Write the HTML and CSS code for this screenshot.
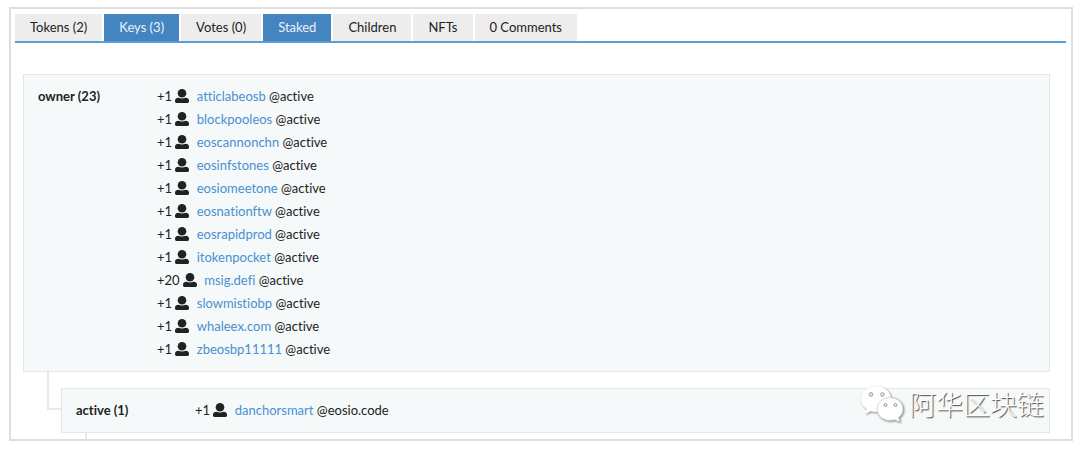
FILE: index.html
```html
<!DOCTYPE html>
<html lang="en">
<head>
    <meta charset="UTF-8">
    <meta name="viewport" content="width=device-width, initial-scale=1.0">
    <title>Account Keys</title>
    <link rel="stylesheet" href="styles.css">
</head>
<body>
    <!-- Shared icon shapes -->
    <svg class="sprite" width="0" height="0" aria-hidden="true">
        <symbol id="user" viewBox="0 0 14 14">
            <circle cx="7" cy="4.300" r="4.300"/>
            <path d="M0 11.600C0 9.800 1.400 8.700 3.400 8.700 5.600 9.700 8.400 9.700 10.600 8.700 12.600 8.700 14 9.800 14 11.600V12.600Q14 14 12.600 14H1.400Q0 14 0 12.600Z"/>
        </symbol>
    </svg>

    <main class="panel">
        <nav class="tabs" role="tablist">
            <button class="tab" role="tab">Tokens (2)</button>
            <button class="tab active" role="tab">Keys (3)</button>
            <button class="tab" role="tab">Votes (0)</button>
            <button class="tab active" role="tab">Staked</button>
            <button class="tab" role="tab">Children</button>
            <button class="tab" role="tab">NFTs</button>
            <button class="tab" role="tab">0 Comments</button>
        </nav>

        <!-- Permission tree -->
        <div class="tree">
            <section class="permission">
                <h2 class="name">owner (23)</h2>
                <ul class="auths">
                    <li>+1 <svg class="user"><use href="#user"/></svg> <a href="#atticlabeosb">atticlabeosb</a> @active</li>
                    <li>+1 <svg class="user"><use href="#user"/></svg> <a href="#blockpooleos">blockpooleos</a> @active</li>
                    <li>+1 <svg class="user"><use href="#user"/></svg> <a href="#eoscannonchn">eoscannonchn</a> @active</li>
                    <li>+1 <svg class="user"><use href="#user"/></svg> <a href="#eosinfstones">eosinfstones</a> @active</li>
                    <li>+1 <svg class="user"><use href="#user"/></svg> <a href="#eosiomeetone">eosiomeetone</a> @active</li>
                    <li>+1 <svg class="user"><use href="#user"/></svg> <a href="#eosnationftw">eosnationftw</a> @active</li>
                    <li>+1 <svg class="user"><use href="#user"/></svg> <a href="#eosrapidprod">eosrapidprod</a> @active</li>
                    <li>+1 <svg class="user"><use href="#user"/></svg> <a href="#itokenpocket">itokenpocket</a> @active</li>
                    <li>+20 <svg class="user"><use href="#user"/></svg> <a href="#msig.defi">msig.defi</a> @active</li>
                    <li>+1 <svg class="user"><use href="#user"/></svg> <a href="#slowmistiobp">slowmistiobp</a> @active</li>
                    <li>+1 <svg class="user"><use href="#user"/></svg> <a href="#whaleex.com">whaleex.com</a> @active</li>
                    <li>+1 <svg class="user"><use href="#user"/></svg> <a href="#zbeosbp11111">zbeosbp11111</a> @active</li>
                </ul>
            </section>

            <div class="branch">
                <div class="elbow"></div>
                <div class="child">
                    <section class="permission">
                        <h2 class="name">active (1)</h2>
                        <ul class="auths">
                            <li>+1 <svg class="user"><use href="#user"/></svg> <a href="#danchorsmart">danchorsmart</a> @eosio.code</li>
                        </ul>
                    </section>
                    <div class="stub"></div>
                </div>
            </div>
        </div>

        <!-- Watermark over the bottom right corner -->
        <div class="watermark" lang="zh-CN">
            <svg class="wechat" viewBox="0 0 44 38" aria-hidden="true">
                <path d="M16 1C7.700 1 1 6.700 1 14 1 18.100 3.100 21.700 6.600 24.100L5 29 10.800 26.300C12.400 26.800 14.200 27 16 27 24.300 27 31 21.200 31 14S24.300 1 16 1Z"/>
                <path class="front" d="M30 12.500C22.800 12.500 17 17.500 17 24S22.800 35.500 30 35.500C31.700 35.500 33.300 35.200 34.800 34.700L40 37 38.600 32.600C41.400 30.500 43 27.400 43 24 43 17.500 37.200 12.500 30 12.500Z"/>
                <g class="eyes">
                    <circle cx="11" cy="9.500" r="1.800"/>
                    <circle cx="22.500" cy="9.500" r="1.800"/>
                    <circle cx="25.500" cy="20" r="1.500"/>
                    <circle cx="35.500" cy="20" r="1.500"/>
                </g>
            </svg>
            <span>阿华区块链</span>
        </div>
    </main>
</body>
</html>
```
FILE: styles.css
```css
* {
    box-sizing: border-box;
}

body {
    margin: 0;
    padding: 7px 7px 0 9px;
    background: #fff;
    color: #222;
    font-family: Lato, "Noto Sans CJK SC", sans-serif;
    font-size: 13px;
    font-variant-ligatures: none;
    line-height: 23px;
}

.sprite {
    position: absolute;
}

/* Outer frame */
.panel {
    position: relative;
    padding: 5px 5px 0 4px;
    border: 2px solid #dfdfdf;
}

/* Tab bar */
.tabs {
    display: flex;
    gap: 2px;
    border-bottom: 2px solid #5a9fd6;
}

.tab {
    height: 27px;
    padding: 0 15px;
    border: 0;
    background: #ededed;
    color: #222;
    font: inherit;
    cursor: pointer;
}

.tab.active {
    background: #4585bf;
    color: #e8f2fb;
}

/* Permission boxes */
.tree {
    padding: 31px 16px 0 8px;
}

.permission {
    display: flex;
    padding: 10px 14px;
    border: 1px solid #e2e7ec;
    background: #f5f9fa;
}

.name {
    width: 119px;
    margin: 0;
    font-size: 13px;
    font-weight: bold;
}

.auths {
    margin: 0;
    padding: 0;
    list-style: none;
}

.auths a {
    margin-left: 4px;
    color: #4a8fd0;
    text-decoration: none;
}

.auths a:hover {
    text-decoration: underline;
}

.user {
    width: 14px;
    height: 14px;
    fill: #222;
    vertical-align: -2px;
}

/* Lines joining parent and child */
.branch {
    display: flex;
    margin-left: 24px;
}

.elbow {
    width: 14px;
    height: 38px;
    border: solid #e6e8ec;
    border-width: 0 0 2px 2px;
}

.child {
    flex: 1;
    padding-top: 16px;
}

.stub {
    height: 6px;
    margin-left: 24px;
    border-left: 2px solid #e6e8ec;
}

/* Watermark */
.watermark {
    position: absolute;
    right: 27px;
    bottom: 16px;
    display: flex;
    align-items: center;
    gap: 5px;
    color: #fff;
    font-family: "Noto Sans CJK SC", sans-serif;
    font-size: 27px;
    font-weight: 300;
    line-height: 38px;
    text-shadow: 1px 1px 1px #444;
}

.wechat {
    width: 44px;
    height: 38px;
    fill: #fff;
    filter: drop-shadow(1px 1px 1px #888);
}

.front {
    stroke: #bbb;
    stroke-width: 0.6;
}

.eyes {
    fill: #eee;
    stroke: #999;
}
```
